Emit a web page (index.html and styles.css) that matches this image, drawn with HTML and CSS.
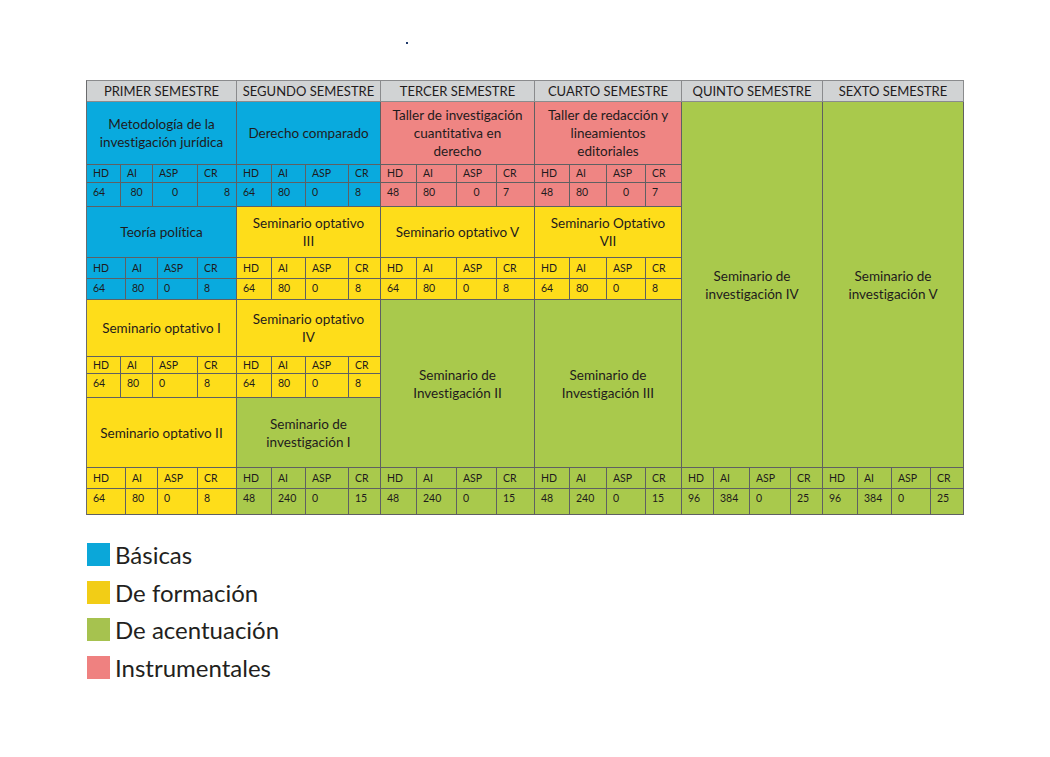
FILE: index.html
```html
<!DOCTYPE html>
<html lang="es">
<head>
<meta charset="utf-8">
<title>Mapa curricular</title>
<link rel="stylesheet" href="styles.css">
</head>
<body>
<div class="page">
  <div class="dot"></div>
  <div class="plan">
    <!-- Primer semestre -->
    <div class="head">PRIMER SEMESTRE</div>
    <div class="name blue">Metodología de la<br>investigación jurídica</div>
    <div class="cr blue g1 k1"><span>HD</span><span>AI</span><span>ASP</span><span>CR</span><span>64</span><span class="c">80</span><span class="c">0</span><span class="r">8</span></div>
    <div class="name blue">Teoría política</div>
    <div class="cr blue g2 k1b"><span>HD</span><span>AI</span><span>ASP</span><span>CR</span><span>64</span><span>80</span><span>0</span><span>8</span></div>
    <div class="name yellow">Seminario optativo I</div>
    <div class="cr yellow g3 k1"><span>HD</span><span>AI</span><span>ASP</span><span>CR</span><span>64</span><span>80</span><span>0</span><span>8</span></div>
    <div class="name yellow">Seminario optativo II</div>
    <div class="cr yellow g4 k1b"><span>HD</span><span>AI</span><span>ASP</span><span>CR</span><span>64</span><span>80</span><span>0</span><span>8</span></div>

    <!-- Segundo semestre -->
    <div class="head">SEGUNDO SEMESTRE</div>
    <div class="name blue">Derecho comparado</div>
    <div class="cr blue g1 k2"><span>HD</span><span>AI</span><span>ASP</span><span>CR</span><span>64</span><span>80</span><span>0</span><span>8</span></div>
    <div class="name yellow">Seminario optativo<br>III</div>
    <div class="cr yellow g2 k2"><span>HD</span><span>AI</span><span>ASP</span><span>CR</span><span>64</span><span>80</span><span>0</span><span>8</span></div>
    <div class="name yellow">Seminario optativo<br>IV</div>
    <div class="cr yellow g3 k2"><span>HD</span><span>AI</span><span>ASP</span><span>CR</span><span>64</span><span>80</span><span>0</span><span>8</span></div>
    <div class="name green">Seminario de<br>investigación I</div>
    <div class="cr green g4 k2"><span>HD</span><span>AI</span><span>ASP</span><span>CR</span><span>48</span><span>240</span><span>0</span><span>15</span></div>

    <!-- Tercer semestre -->
    <div class="head">TERCER SEMESTRE</div>
    <div class="name pink">Taller de investigación<br>cuantitativa en<br>derecho</div>
    <div class="cr pink g1 k3"><span>HD</span><span>AI</span><span>ASP</span><span>CR</span><span>48</span><span>80</span><span class="c">0</span><span>7</span></div>
    <div class="name yellow">Seminario optativo V</div>
    <div class="cr yellow g2 k3"><span>HD</span><span>AI</span><span>ASP</span><span>CR</span><span>64</span><span>80</span><span>0</span><span>8</span></div>
    <div class="name green tall">Seminario de<br>Investigación II</div>
    <div class="cr green g4 k3"><span>HD</span><span>AI</span><span>ASP</span><span>CR</span><span>48</span><span>240</span><span>0</span><span>15</span></div>

    <!-- Cuarto semestre -->
    <div class="head">CUARTO SEMESTRE</div>
    <div class="name pink">Taller de redacción y<br>lineamientos<br>editoriales</div>
    <div class="cr pink g1 k4"><span>HD</span><span>AI</span><span>ASP</span><span>CR</span><span>48</span><span>80</span><span class="c">0</span><span>7</span></div>
    <div class="name yellow">Seminario Optativo<br>VII</div>
    <div class="cr yellow g2 k4"><span>HD</span><span>AI</span><span>ASP</span><span>CR</span><span>64</span><span>80</span><span>0</span><span>8</span></div>
    <div class="name green tall">Seminario de<br>Investigación III</div>
    <div class="cr green g4 k4"><span>HD</span><span>AI</span><span>ASP</span><span>CR</span><span>48</span><span>240</span><span>0</span><span>15</span></div>

    <!-- Quinto semestre -->
    <div class="head">QUINTO SEMESTRE</div>
    <div class="name green full">Seminario de<br>investigación IV</div>
    <div class="cr green g4 k5"><span>HD</span><span>AI</span><span>ASP</span><span>CR</span><span>96</span><span>384</span><span>0</span><span>25</span></div>

    <!-- Sexto semestre -->
    <div class="head">SEXTO SEMESTRE</div>
    <div class="name green full">Seminario de<br>investigación V</div>
    <div class="cr green g4 k6"><span>HD</span><span>AI</span><span>ASP</span><span>CR</span><span>96</span><span>384</span><span>0</span><span>25</span></div>
  </div>

  <ul class="legend">
    <li><span class="sw sw-blue"></span>Básicas</li>
    <li><span class="sw sw-yellow"></span>De formación</li>
    <li><span class="sw sw-green"></span>De acentuación</li>
    <li><span class="sw sw-pink"></span>Instrumentales</li>
  </ul>
</div>
</body>
</html>
```

FILE: styles.css
```css
* { box-sizing: border-box; }

html, body {
  margin: 0;
  padding: 0;
  background: #ffffff;
}

body {
  font-family: Lato, "Open Sans", "Liberation Sans", sans-serif;
  font-variant-ligatures: none;
  font-feature-settings: "liga" 0, "clig" 0, "dlig" 0, "calt" 0;
  color: #1f1b1c;
}

.page {
  width: 1050px;
  height: 757px;
  padding-left: 86px;
  overflow: hidden;
}

.dot {
  width: 2px;
  height: 2px;
  background: #1f3a6b;
  margin: 42px 0 0 320px;
}

.plan {
  margin-top: 36px;
  display: grid;
  grid-auto-flow: column;
  grid-template-columns: 150px 144px 154px 147px 141px 141px;
  grid-template-rows: 21px 63px 18px 24px 51px 21px 21px 57px 17px 24px 70px 21px 26px;
  width: 878px;
  border-top: 1px solid #8a8b8d;
  border-left: 1px solid #6a6b6d;
}

.head {
  background: #d1d3d4;
  border-right: 1px solid #8a8b8d;
  border-bottom: 1px solid #8a8b8d;
  font-size: 13px;
  line-height: 20px;
  text-align: center;
}

.name {
  display: flex;
  align-items: center;
  justify-content: center;
  text-align: center;
  font-size: 13.5px;
  line-height: 18px;
  border-right: 1px solid #5f6062;
  border-bottom: 1px solid #5f6062;
}

.name.tall { grid-row: span 4; }
.name.full { grid-row: span 10; }

.cr {
  grid-row: span 2;
  display: grid;
  border-right: 1px solid #5f6062;
  border-bottom: 1px solid #5f6062;
  font-size: 10.5px;
}

.cr span {
  padding-left: 6px;
  border-right: 1px solid #5f6062;
  line-height: 13px;
}

.cr span:nth-child(4n) { border-right: 0; }

.cr span:nth-child(-n+4) {
  border-bottom: 1px solid #5f6062;
  display: flex;
  align-items: center;
}

.cr span:nth-child(n+5) { padding-top: 3px; }

.cr span.c { text-align: center; padding-left: 0; }
.cr span.r { text-align: right; padding-left: 0; padding-right: 6px; }

.g1 { grid-template-rows: 18px 1fr; }
.g2 { grid-template-rows: 21px 1fr; }
.g3 { grid-template-rows: 17px 1fr; }
.g4 { grid-template-rows: 21px 1fr; }

.k1  { grid-template-columns: 34px 32px 45px 1fr; }
.k1b { grid-template-columns: 39px 32px 40px 1fr; }
.k2  { grid-template-columns: 35px 34px 43px 1fr; }
.k3  { grid-template-columns: 36px 40px 40px 1fr; }
.k4  { grid-template-columns: 35px 37px 39px 1fr; }
.k5  { grid-template-columns: 32px 36px 41px 1fr; }
.k6  { grid-template-columns: 35px 34px 39px 1fr; }

.blue   { background: #09aade; }
.yellow { background: #fedd1a; }
.green  { background: #a9c94c; }
.pink   { background: #ef8583; }

.legend {
  list-style: none;
  margin: 28px 0 0 0;
  padding: 0;
  display: flex;
  flex-direction: column;
  gap: 14.5px;
}

.legend li {
  display: flex;
  align-items: center;
  gap: 5px;
  height: 23px;
  font-size: 24px;
  line-height: 23px;
  color: #231f20;
}

.sw {
  width: 23px;
  height: 23px;
  flex: none;
  margin-left: 1px;
}

.sw-blue   { background: #0ba7d9; }
.sw-yellow { background: #f2cd16; }
.sw-green  { background: #a6c24f; }
.sw-pink   { background: #ef8180; }
```
